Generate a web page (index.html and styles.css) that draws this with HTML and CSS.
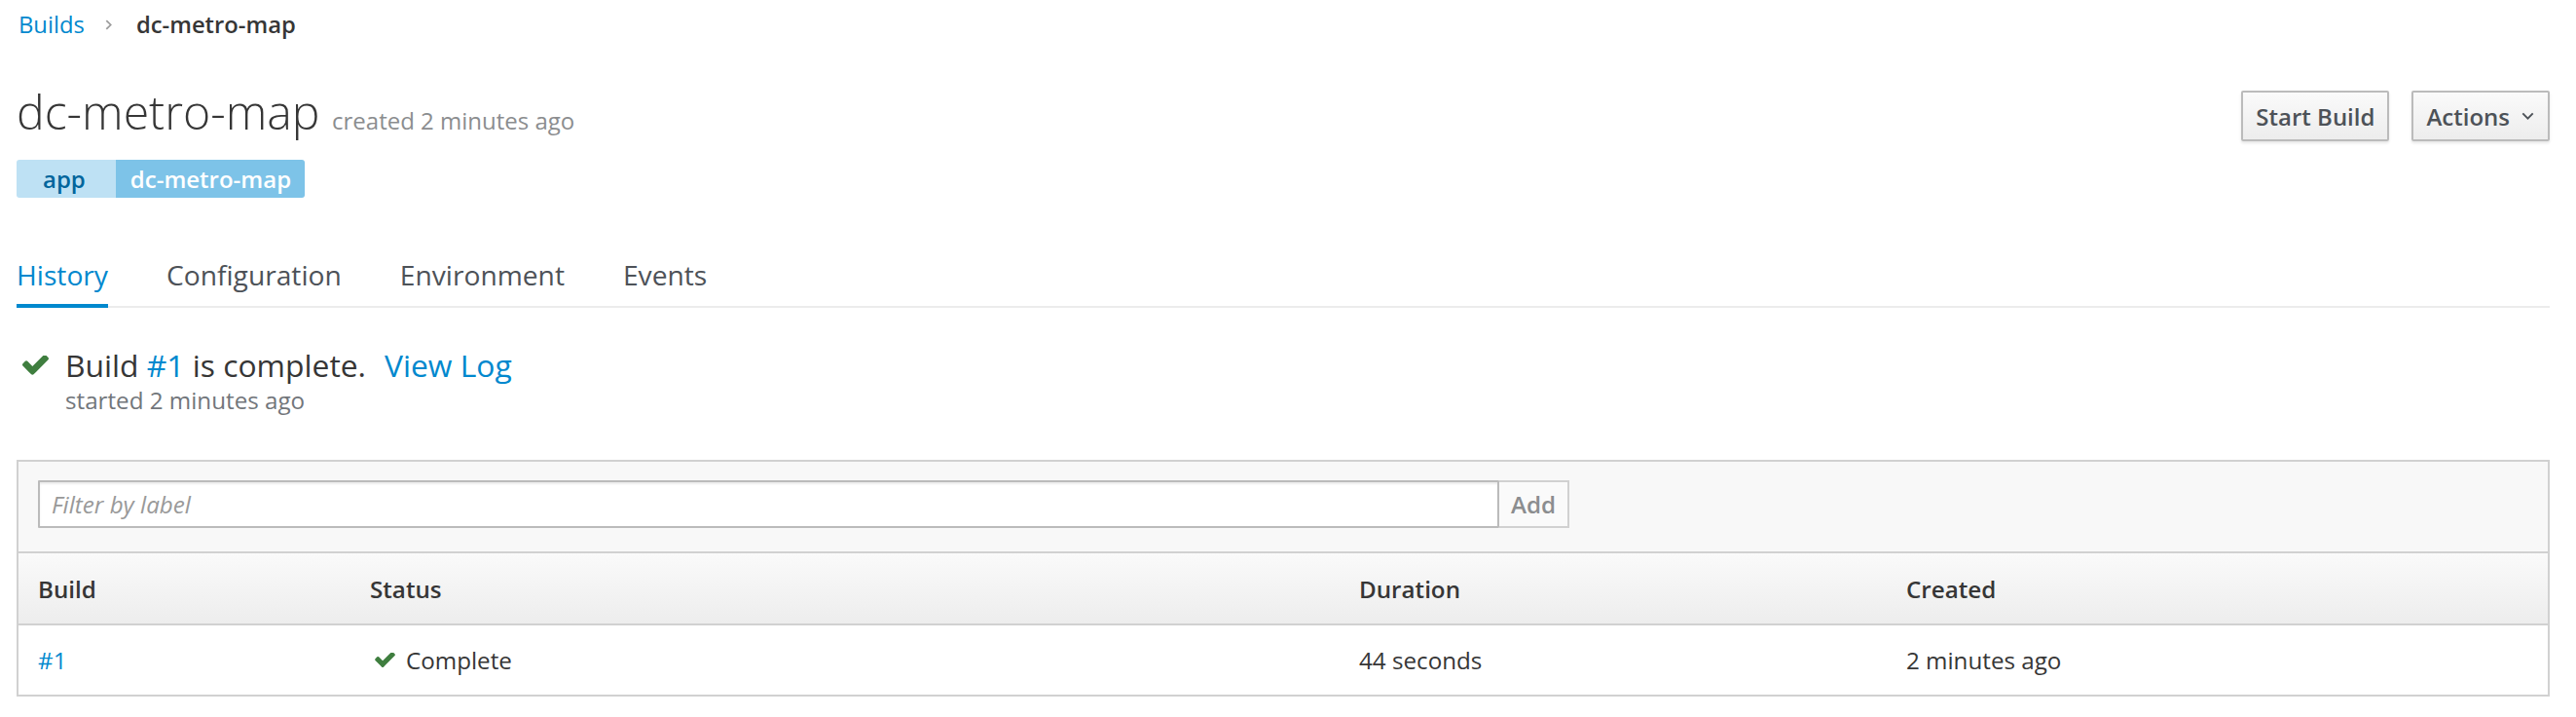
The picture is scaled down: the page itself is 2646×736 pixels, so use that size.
FILE: index.html
```html
<!DOCTYPE html>
<html lang="en">
<head>
<meta charset="utf-8">
<title>dc-metro-map</title>
<link rel="stylesheet" href="styles.css">
</head>
<body>
<div class="page">
  <nav class="breadcrumb">
    <a class="link" href="#">Builds</a>
    <svg class="crumb-sep" viewBox="0 0 6 10" width="7" height="11"><path d="M1 1l4 4-4 4" fill="none" stroke="#9c9c9c" stroke-width="1.6"/></svg>
    <span class="crumb-current">dc-metro-map</span>
  </nav>

  <div class="heading-row">
    <h1 class="title">dc-metro-map <small class="title-meta">created 2 minutes ago</small></h1>
    <div class="head-actions">
      <button class="btn">Start Build</button>
      <button class="btn">Actions <svg class="caret" viewBox="0 0 10 6" width="13" height="8"><path d="M1 1l4 4 4-4" fill="none" stroke="#4d5258" stroke-width="1.5"/></svg></button>
    </div>
  </div>

  <div class="labels">
    <span class="label-key">app</span><span class="label-value">dc-metro-map</span>
  </div>

  <ul class="tabs">
    <li><a class="tab active" href="#">History</a></li>
    <li><a class="tab" href="#">Configuration</a></li>
    <li><a class="tab" href="#">Environment</a></li>
    <li><a class="tab" href="#">Events</a></li>
  </ul>

  <div class="status">
    <div class="status-line">
      <svg class="check check-lg" viewBox="121 402 1550 1120"><path d="M1671 566q0 40-28 68l-724 724-136 136q-28 28-68 28t-68-28l-136-136-362-362q-28-28-28-68t28-68l136-136q28-28 68-28t68 28l294 295 656-657q28-28 68-28t68 28l136 136q28 28 28 68z"/></svg>
      <span>Build <a class="link" href="#">#1</a> is complete.</span>
      <a class="link view-log" href="#">View Log</a>
    </div>
    <div class="status-sub">started 2 minutes ago</div>
  </div>

  <div class="panel">
    <div class="filter-bar">
      <input class="filter-input" type="text" placeholder="Filter by label">
      <button class="add-btn">Add</button>
    </div>
    <div class="grid-row grid-head">
      <div class="cell">Build</div>
      <div class="cell">Status</div>
      <div class="cell">Duration</div>
      <div class="cell">Created</div>
    </div>
    <div class="grid-row grid-body">
      <div class="cell"><a class="link" href="#">#1</a></div>
      <div class="cell"><svg class="check check-sm" viewBox="121 402 1550 1120"><path d="M1671 566q0 40-28 68l-724 724-136 136q-28 28-68 28t-68-28l-136-136-362-362q-28-28-28-68t28-68l136-136q28-28 68-28t68 28l294 295 656-657q28-28 68-28t68 28l136 136q28 28 28 68z"/></svg>Complete</div>
      <div class="cell">44 seconds</div>
      <div class="cell">2 minutes ago</div>
    </div>
  </div>
</div>
</body>
</html>
```

FILE: styles.css
```css
* { box-sizing: border-box; }

html, body {
  margin: 0;
  background: #fff;
}

body {
  font-family: "Open Sans", "Noto Sans", sans-serif;
  font-size: 24.2px;
  color: #363636;
}

.page {
  padding: 8px 27px 0 17px;
}

.link {
  color: #0088ce;
  text-decoration: none;
}

/* breadcrumb */
.breadcrumb {
  display: flex;
  align-items: center;
  height: 34px;
  line-height: 34px;
  padding-left: 2px;
  font-size: 23.8px;
}
.crumb-sep {
  margin: 0 25px 0 21px;
}
.crumb-current {
  font-weight: 600;
}

/* heading */
.heading-row {
  display: flex;
  align-items: center;
  justify-content: space-between;
  margin-top: 51px;
  height: 52px;
}
.title {
  margin: 0;
  font-size: 48.2px;
  font-weight: 300;
  line-height: 52px;
  white-space: nowrap;
}
.title-meta {
  font-size: 24px;
  font-weight: 400;
  color: #8b8d8f;
}
.head-actions {
  display: flex;
  gap: 23px;
}
.btn {
  font-family: inherit;
  font-size: 24px;
  font-weight: 600;
  color: #4d5258;
  height: 52px;
  padding: 0 13px;
  border: 2px solid #bbb;
  border-radius: 2px;
  background: linear-gradient(#fafafa, #ededed);
  box-shadow: 0 2px 3px rgba(3, 3, 3, 0.1);
  display: inline-flex;
  align-items: center;
}
.caret {
  margin-left: 12px;
  margin-right: 1px;
}

/* labels */
.labels {
  display: flex;
  margin-top: 19px;
  height: 39px;
  line-height: 39px;
  font-size: 24px;
  font-weight: 600;
}
.label-key {
  background: #bee1f4;
  color: #00659c;
  padding: 0 31px 0 27px;
  border-radius: 3px 0 0 3px;
}
.label-value {
  background: #7dc3e8;
  color: #fff;
  padding: 0 14px 0 15px;
  border-radius: 0 3px 3px 0;
}

/* tabs */
.tabs {
  list-style: none;
  margin: 59px 0 0;
  padding: 0;
  display: flex;
  gap: 60px;
  border-bottom: 2px solid #ececec;
}
.tab {
  display: block;
  font-size: 28.2px;
  line-height: 40px;
  padding-bottom: 10px;
  color: #4d5258;
  text-decoration: none;
  border-bottom: 4px solid transparent;
  margin-bottom: -2px;
}
.tab.active {
  color: #0088ce;
  border-bottom-color: #0088ce;
}

/* status */
.status {
  margin-top: 39px;
  padding-left: 6px;
}
.status-line {
  display: flex;
  align-items: center;
  font-size: 31.8px;
  line-height: 40px;
}
.check {
  fill: #3f7e3f;
}
.check-lg {
  width: 27px;
  height: 20px;
  margin-right: 17px;
}
.view-log {
  margin-left: 19px;
}
.status-sub {
  padding-left: 44px;
  line-height: 32px;
  color: #72767b;
}

/* panel */
.panel {
  margin-top: 45px;
  border: 2px solid #d1d1d1;
}
.filter-bar {
  background: #f8f8f8;
  padding: 19px 20px 24px;
  display: flex;
}
.filter-input {
  flex: 0 0 1501px;
  height: 49px;
  border: 2px solid #bbb;
  border-radius: 1px;
  box-shadow: inset 0 2px 2px rgba(3, 3, 3, 0.08);
  padding: 0 12px;
  font-family: inherit;
  font-size: 24.2px;
  background: #fff;
  outline: none;
}
.filter-input::placeholder {
  color: #999;
  font-style: italic;
}
.add-btn {
  width: 72px;
  height: 49px;
  font-family: inherit;
  font-size: 24.2px;
  font-weight: 600;
  color: #8b8d8f;
  background: #fafafa;
  border: 2px solid #d1d1d1;
  border-left: 0;
}
.grid-row {
  display: grid;
  grid-template-columns: 341px 1016px 562px 1fr;
  align-items: center;
}
.grid-head {
  height: 76px;
  border-top: 2px solid #d1d1d1;
  border-bottom: 2px solid #d1d1d1;
  background: linear-gradient(#fafafa, #ededed);
  font-weight: 600;
}
.grid-body {
  height: 71px;
  background: #fff;
}
.cell {
  padding-left: 20px;
  display: flex;
  align-items: center;
}
.check-sm {
  width: 21px;
  height: 15px;
  margin: 0 11px 0 5px;
}
```
